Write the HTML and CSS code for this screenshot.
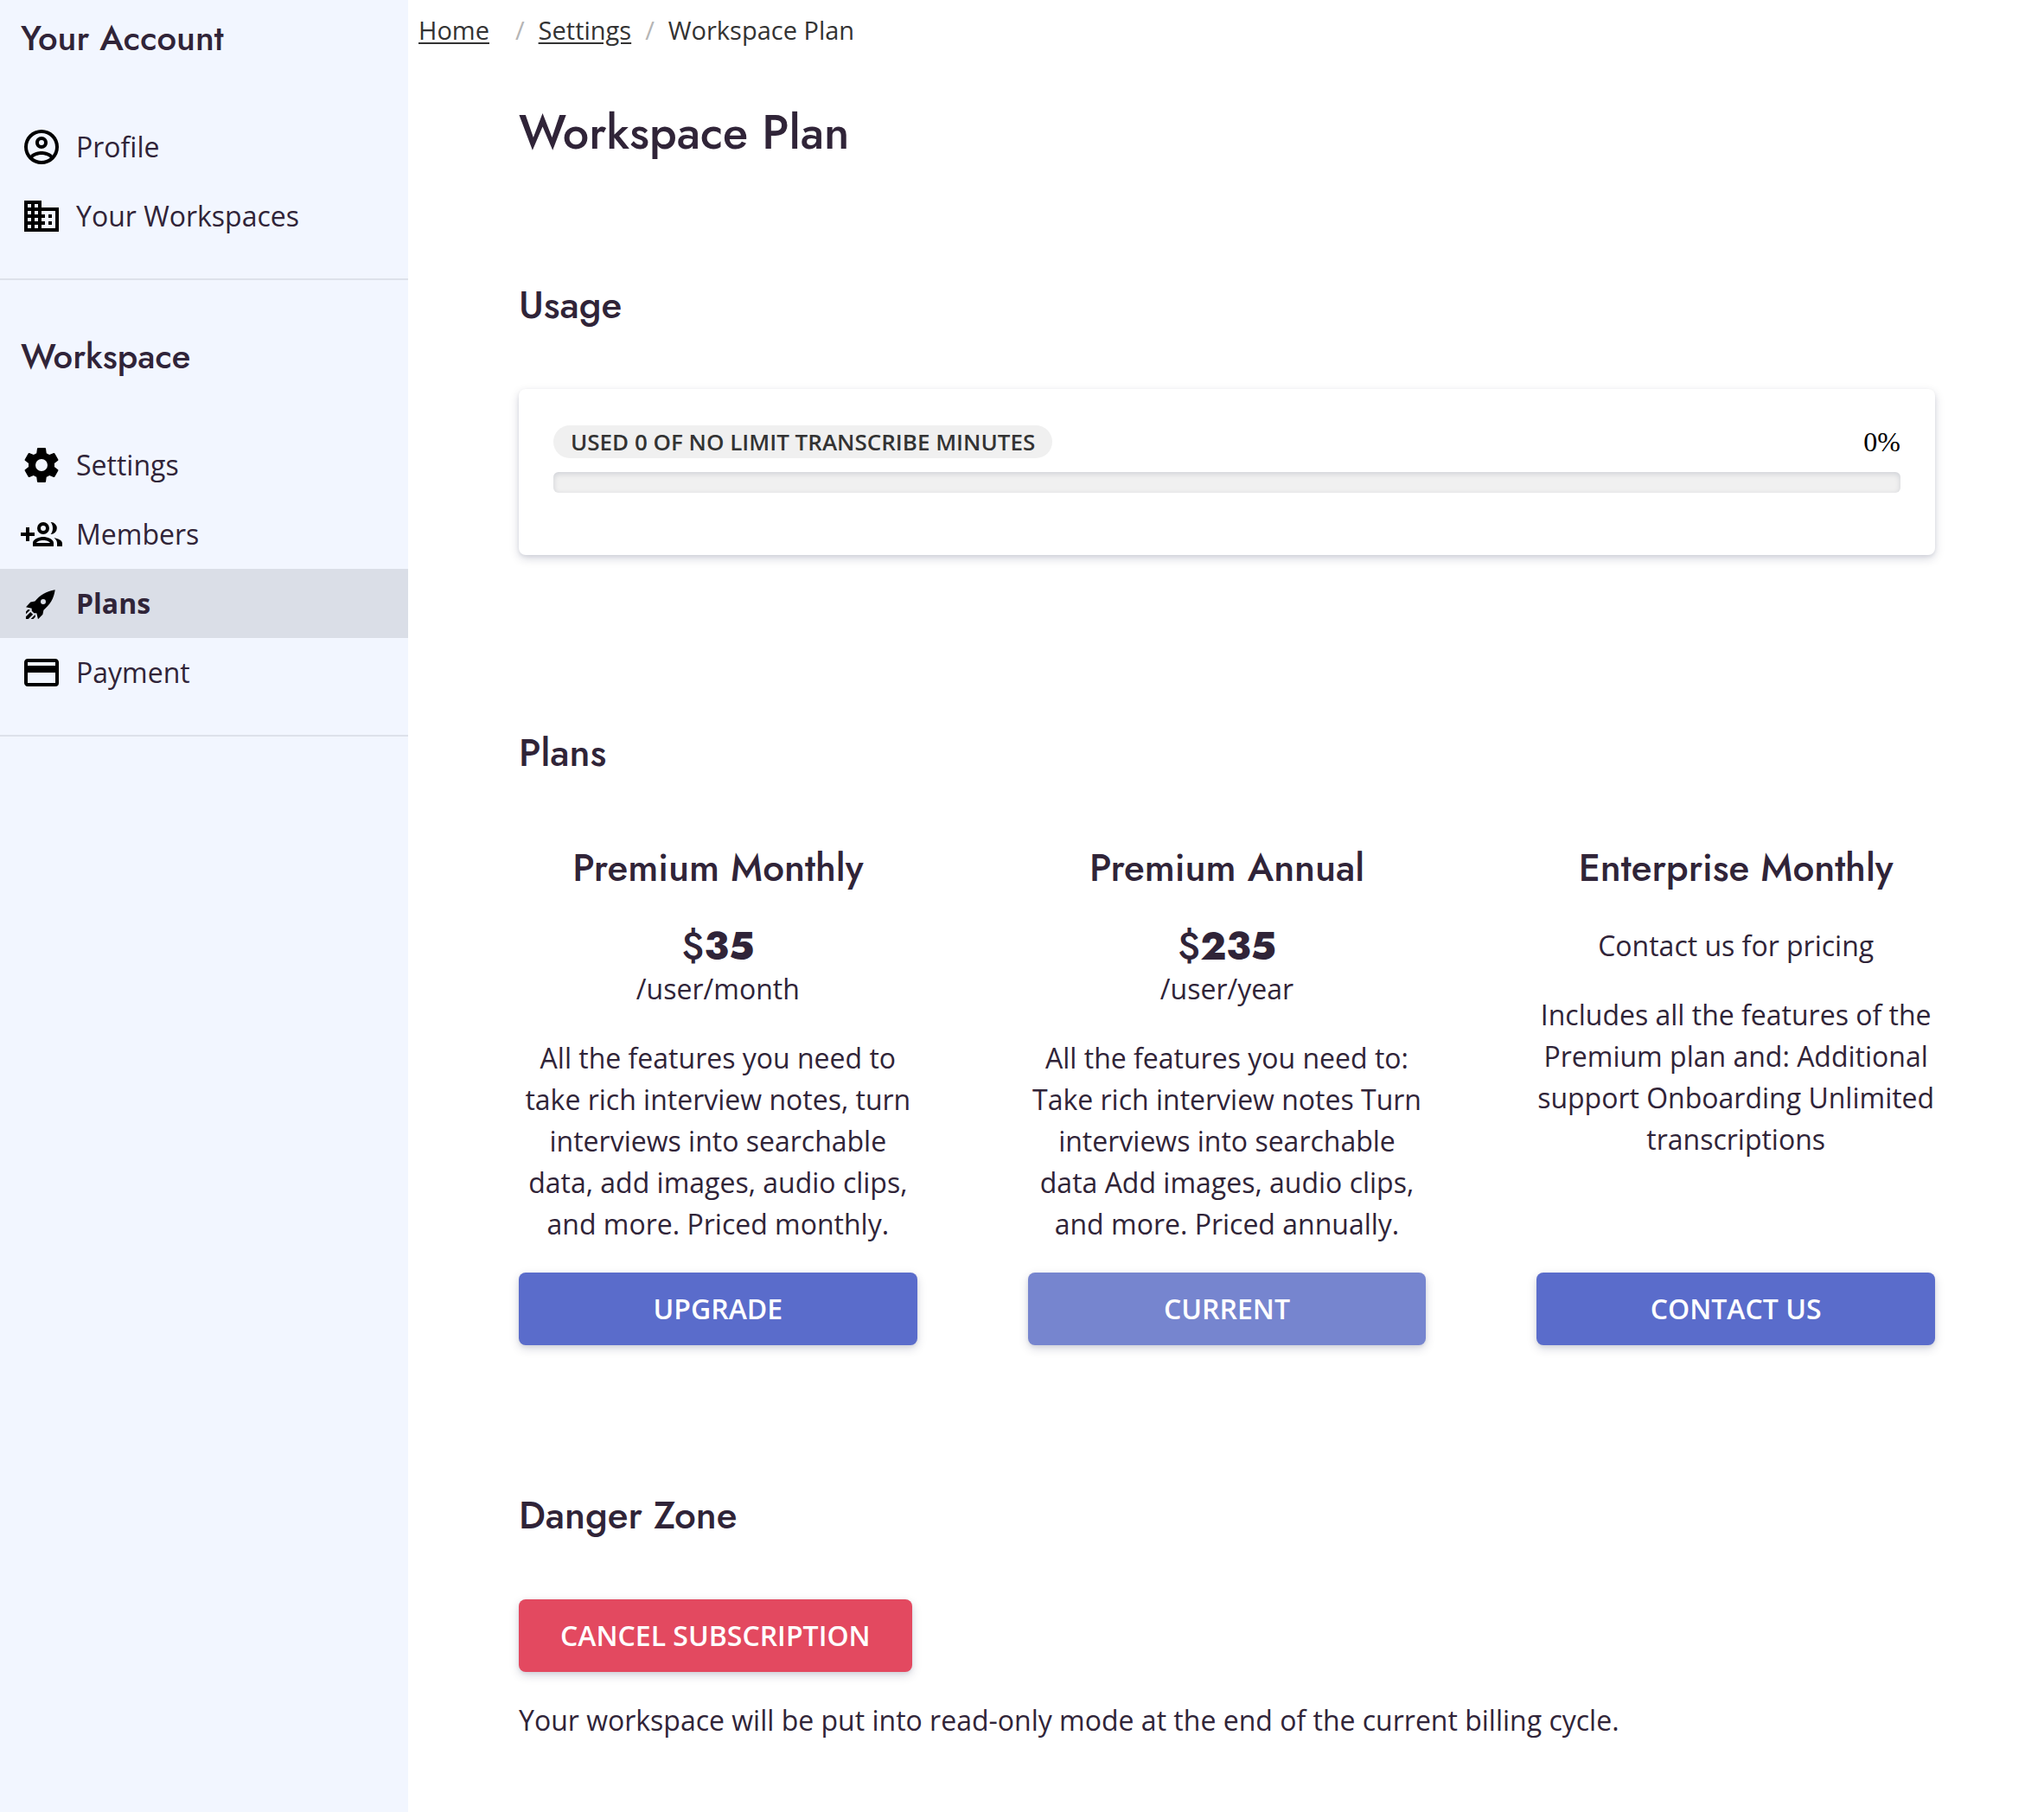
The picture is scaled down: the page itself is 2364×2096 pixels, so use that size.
FILE: index.html
```html
<!DOCTYPE html>
<html lang="en">
<head>
  <meta charset="utf-8">
  <meta name="viewport" content="width=device-width, initial-scale=1">
  <title>Workspace Plan</title>
  <link rel="stylesheet" href="styles.css">
</head>
<body>
  <div class="layout">
    <aside class="sidebar">
      <nav class="nav-group" aria-labelledby="nav-account">
        <h2 class="nav-title" id="nav-account">Your Account</h2>
        <ul class="nav-list">
          <li><a class="nav-link" href="#profile">
            <svg class="icon" viewBox="0 0 24 24" aria-hidden="true"><path d="M12,2A10,10 0 0,0 2,12A10,10 0 0,0 12,22A10,10 0 0,0 22,12A10,10 0 0,0 12,2M7.07,18.28C7.5,17.38 10.12,16.5 12,16.5C13.88,16.5 16.5,17.38 16.93,18.28C15.57,19.36 13.86,20 12,20C10.14,20 8.43,19.36 7.07,18.28M18.36,16.83C16.93,15.09 13.46,14.5 12,14.5C10.54,14.5 7.07,15.09 5.64,16.83C4.62,15.5 4,13.82 4,12C4,7.59 7.59,4 12,4C16.41,4 20,7.59 20,12C20,13.82 19.38,15.5 18.36,16.83M12,6C10.06,6 8.5,7.56 8.5,9.5C8.5,11.44 10.06,13 12,13C13.94,13 15.5,11.44 15.5,9.5C15.5,7.56 13.94,6 12,6M12,11A1.5,1.5 0 0,1 10.5,9.5A1.5,1.5 0 0,1 12,8A1.5,1.5 0 0,1 13.5,9.5A1.5,1.5 0 0,1 12,11Z"/></svg>
            Profile</a></li>
          <li><a class="nav-link" href="#workspaces">
            <svg class="icon" viewBox="0 0 24 24" aria-hidden="true"><path d="M18,15H16V17H18M18,11H16V13H18M20,19H12V17H14V15H12V13H14V11H12V9H20M10,7H8V5H10M10,11H8V9H10M10,15H8V13H10M10,19H8V17H10M6,7H4V5H6M6,11H4V9H6M6,15H4V13H6M6,19H4V17H6M12,7V3H2V21H22V7H12Z"/></svg>
            Your Workspaces</a></li>
        </ul>
      </nav>
      <nav class="nav-group" aria-labelledby="nav-workspace">
        <h2 class="nav-title" id="nav-workspace">Workspace</h2>
        <ul class="nav-list">
          <li><a class="nav-link" href="#settings">
            <svg class="icon" viewBox="0 0 24 24" aria-hidden="true"><path d="M12,15.5A3.5,3.5 0 0,1 8.5,12A3.5,3.5 0 0,1 12,8.5A3.5,3.5 0 0,1 15.5,12A3.5,3.5 0 0,1 12,15.5M19.43,12.97C19.47,12.65 19.5,12.33 19.5,12C19.5,11.67 19.47,11.34 19.43,11L21.54,9.37C21.73,9.22 21.78,8.95 21.66,8.73L19.66,5.27C19.54,5.05 19.27,4.96 19.05,5.05L16.56,6.05C16.04,5.66 15.5,5.32 14.87,5.07L14.5,2.42C14.46,2.18 14.25,2 14,2H10C9.75,2 9.54,2.18 9.5,2.42L9.13,5.07C8.5,5.32 7.96,5.66 7.44,6.05L4.95,5.05C4.73,4.96 4.46,5.05 4.34,5.27L2.34,8.73C2.21,8.95 2.27,9.22 2.46,9.37L4.57,11C4.53,11.34 4.5,11.67 4.5,12C4.5,12.33 4.53,12.65 4.57,12.97L2.46,14.63C2.27,14.78 2.21,15.05 2.34,15.27L4.34,18.73C4.46,18.95 4.73,19.03 4.95,18.95L7.44,17.94C7.96,18.34 8.5,18.68 9.13,18.93L9.5,21.58C9.54,21.82 9.75,22 10,22H14C14.25,22 14.46,21.82 14.5,21.58L14.87,18.93C15.5,18.67 16.04,18.34 16.56,17.94L19.05,18.95C19.27,19.03 19.54,18.95 19.66,18.73L21.66,15.27C21.78,15.05 21.73,14.78 21.54,14.63L19.43,12.97Z"/></svg>
            Settings</a></li>
          <li><a class="nav-link" href="#members">
            <svg class="icon" viewBox="0 0 24 24" aria-hidden="true"><path fill-rule="evenodd" d="M3,8H5V11H8V13H5V16H3V13H0V11H3ZM13,5A3.5,3.5 0 0,1 13,12A3.5,3.5 0 0,1 13,5ZM13,7A1.5,1.5 0 0,0 13,10A1.5,1.5 0 0,0 13,7ZM17.5,5A3.5,3.5 0 0,1 17.3,12C18.1,11 18.5,9.8 18.5,8.5C18.5,7.2 18.1,6 17.3,5ZM13,13.5C10.9,13.5 7,14.6 7,17V19H19V17C19,14.6 15.1,13.5 13,13.5ZM9,17C9.3,16.3 10.9,15.5 13,15.5C15.1,15.5 16.7,16.3 17,17ZM19.2,14.1C21.4,14.5 24,15.4 24,17.2V19H21V17.2C21,15.9 20.3,14.9 19.2,14.1Z"/></svg>
            Members</a></li>
          <li><a class="nav-link nav-link-active" href="#plans" aria-current="page">
            <svg class="icon" viewBox="0 0 24 24" aria-hidden="true"><path fill-rule="evenodd" d="M3,14.12L5.64,11.3L8.17,10.79C11.2,7.1 14.9,4.8 19.85,4.1C19.2,9.1 16.9,12.7 13.21,15.83L12.7,18.36L10,21.1L9.17,17.66C7.76,17.66 7.76,17.66 7.05,16.95C6.34,16.24 6.34,16.24 6.34,14.83L3,14.12M5.64,16.95L7.05,18.36L4.39,21.03H2.97V19.61L5.64,16.95M4.22,15.54L5.46,15.71L3,18.18V16.74L4.22,15.54M8.29,18.54L8.46,19.78L7.26,21H5.82L8.29,18.54M13,9.5A1.5,1.5 0 0,0 11.5,11A1.5,1.5 0 0,0 13,12.5A1.5,1.5 0 0,0 14.5,11A1.5,1.5 0 0,0 13,9.5Z"/></svg>
            Plans</a></li>
          <li><a class="nav-link" href="#payment">
            <svg class="icon" viewBox="0 0 24 24" aria-hidden="true"><path d="M20,8H4V6H20M20,18H4V12H20M20,4H4C2.89,4 2,4.89 2,6V18C2,19.11 2.89,20 4,20H20A2,2 0 0,0 22,18V6C22,4.89 21.1,4 20,4Z"/></svg>
            Payment</a></li>
        </ul>
      </nav>
    </aside>

    <main class="main">
      <nav class="breadcrumb" aria-label="Breadcrumb">
        <a class="crumb crumb-home" href="#home">Home</a>
        <span class="slash">/</span>
        <a class="crumb" href="#settings">Settings</a>
        <span class="slash">/</span>
        <span>Workspace Plan</span>
      </nav>

      <div class="content">
        <h1 class="page-title">Workspace Plan</h1>

        <section class="section-usage">
          <h2 class="section-title">Usage</h2>
          <div class="card">
            <div class="usage-head">
              <label class="tag" for="usage">USED 0 OF NO LIMIT TRANSCRIBE MINUTES</label>
              <span class="percent">0%</span>
            </div>
            <progress class="bar" id="usage" value="0" max="100"></progress>
          </div>
        </section>

        <section class="section-plans">
          <h2 class="section-title">Plans</h2>
          <div class="plans">
            <article class="plan">
              <h3 class="plan-name">Premium Monthly</h3>
              <p class="price">$<strong class="amount">35</strong></p>
              <p>/user/month</p>
              <p class="plan-text">All the features you need to take rich interview notes, turn interviews into searchable data, add images, audio clips, and more. Priced monthly.</p>
              <button class="button" type="button">UPGRADE</button>
            </article>
            <article class="plan">
              <h3 class="plan-name">Premium Annual</h3>
              <p class="price">$<strong class="amount">235</strong></p>
              <p>/user/year</p>
              <p class="plan-text">All the features you need to: Take rich interview notes Turn interviews into searchable data Add images, audio clips, and more. Priced annually.</p>
              <button class="button" type="button" disabled>CURRENT</button>
            </article>
            <article class="plan">
              <h3 class="plan-name">Enterprise Monthly</h3>
              <p>Contact us for pricing</p>
              <p class="plan-text">Includes all the features of the Premium plan and: Additional support Onboarding Unlimited transcriptions</p>
              <button class="button" type="button">CONTACT US</button>
            </article>
          </div>
        </section>

        <section class="section-danger">
          <h2 class="section-title">Danger Zone</h2>
          <button class="button button-danger" type="button">CANCEL SUBSCRIPTION</button>
          <p class="note">Your workspace will be put into read-only mode at the end of the current billing cycle.</p>
        </section>
      </div>
    </main>
  </div>
</body>
</html>
```
FILE: styles.css
```css
:root {
  --ink: #302438;
  --primary: #5a6ccb;
  --shadow: 0 4px 12px rgba(10, 20, 60, 0.16), 0 2px 4px rgba(10, 20, 60, 0.08);
  --heading: Futura, Jost, Lato, sans-serif;
}

* {
  box-sizing: border-box;
}

body {
  margin: 0;
  background: #fff;
  color: var(--ink);
  font: 32px/48px "Open Sans", sans-serif;
}

h1, h2, h3, p, ul {
  margin: 0;
  padding: 0;
}

.layout {
  display: grid;
  grid-template-columns: 472px 1fr;
  min-height: 100vh;
}

/* Sidebar */
.sidebar {
  background: #f2f6ff;
}

.nav-group {
  padding: 64px 0 32px;
  border-bottom: 2px solid #dde1ea;
}

.nav-group:first-child {
  padding-top: 20px;
}

.nav-title {
  padding: 0 24px;
  margin-bottom: 62px;
  font: 500 40px/48px var(--heading);
}

.nav-list {
  list-style: none;
}

.nav-link {
  display: flex;
  align-items: center;
  gap: 16px;
  height: 80px;
  padding: 0 24px;
  color: inherit;
  text-decoration: none;
}

.nav-link-active {
  background: #dadee7;
  font-weight: 700;
}

.icon {
  width: 48px;
  height: 48px;
  flex: none;
  fill: #000;
}

/* Main column */
.breadcrumb {
  display: flex;
  gap: 16px;
  padding: 11px 12px;
  color: #333;
  font-size: 29px;
}

.crumb {
  color: inherit;
  text-underline-offset: 3px;
}

.crumb-home {
  margin-right: 14px;
}

.slash {
  color: #b5b5b5;
}

.content {
  padding: 49px 126px 80px 128px;
}

.page-title {
  font: 500 54px/68px var(--heading);
}

.section-title,
.plan-name {
  font: 500 44px/52px var(--heading);
}

.section-title {
  margin-bottom: 71px;
}

.section-usage {
  margin-top: 140px;
}

.section-plans {
  margin-top: 203px;
}

.section-danger {
  margin-top: 171px;
}

.card {
  display: flex;
  flex-direction: column;
  gap: 16px;
  padding: 42px 40px 72px;
  border-radius: 8px;
  box-shadow: var(--shadow);
}

.usage-head {
  display: flex;
  align-items: center;
  justify-content: space-between;
}

.tag {
  padding: 0 20px;
  border-radius: 19px;
  background: #f0f0f0;
  color: #333;
  font-size: 26px;
  font-weight: 600;
  line-height: 38px;
}

.percent {
  color: #000;
  font-family: "Liberation Serif", serif;
  line-height: 38px;
}

.bar {
  display: block;
  appearance: none;
  width: 100%;
  height: 24px;
  border: 0;
  border-radius: 6px;
  background: #f0f0f0;
  box-shadow: inset 0 2px 6px rgba(10, 20, 60, 0.14);
}

.bar::-webkit-progress-bar {
  background: transparent;
}

.plans {
  display: grid;
  grid-template-columns: repeat(3, 1fr);
  gap: 128px;
  margin-top: 81px;
}

.plan {
  display: flex;
  flex-direction: column;
  text-align: center;
}

.plan-name {
  margin-bottom: 40px;
  white-space: nowrap;
}

.price {
  font: 500 44px/50px var(--heading);
}

.amount {
  font-weight: 800;
}

.plan-text {
  margin: 32px 0;
}

.button {
  height: 84px;
  padding: 0 48px;
  margin-top: auto;
  border: 0;
  border-radius: 8px;
  background: var(--primary);
  box-shadow: var(--shadow);
  color: #fff;
  font: 600 32px/48px "Open Sans", sans-serif;
}

.button:disabled {
  background: #7685cf;
}

.button-danger {
  background: #e34960;
}

.note {
  margin-top: 32px;
}
```
